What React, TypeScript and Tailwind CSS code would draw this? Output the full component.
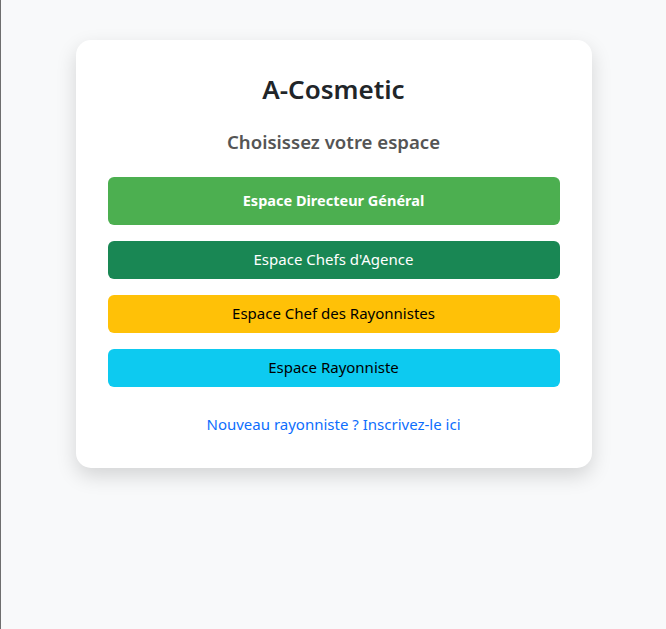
import React from "react";

export default function App() {
  return (
    <div
      className="min-h-[629px] bg-[#f8f9fa] border-l border-[#6e6e6e] pt-10"
      style={{ fontFamily: '"Noto Sans", "Open Sans", sans-serif' }}
    >
      <div className="w-[516px] mx-auto bg-white rounded-[15px] shadow-[0_8px_20px_rgba(0,0,0,0.15)] p-8 text-center">
        <h1 className="text-[26px] leading-[33px] font-semibold text-[#212529] mb-[23.6px] pt-px">A-Cosmetic</h1>
        <h2 className="text-[18.6px] leading-6 font-semibold text-[#555] mb-[23px]">Choisissez votre espace</h2>
        <div className="flex flex-col gap-4">
          <button className="w-full h-12 rounded-[6px] bg-[#4caf50] text-white font-bold text-[14.5px]">
            Espace Directeur Général
          </button>
          <button className="w-full h-[38px] rounded-[6px] bg-[#198754] text-white text-[15px]">
            Espace Chefs d'Agence
          </button>
          <button className="w-full h-[38px] rounded-[6px] bg-[#ffc107] text-black text-[15px]">
            Espace Chef des Rayonnistes
          </button>
          <button className="w-full h-[38px] rounded-[6px] bg-[#0dcaf0] text-black text-[15px]">
            Espace Rayonniste
          </button>
        </div>
        <div className="mt-[25px] leading-6">
          <a className="text-[#0d6efd] text-[15px]" href="#">
            Nouveau rayonniste ? Inscrivez-le ici
          </a>
        </div>
      </div>
    </div>
  );
}
